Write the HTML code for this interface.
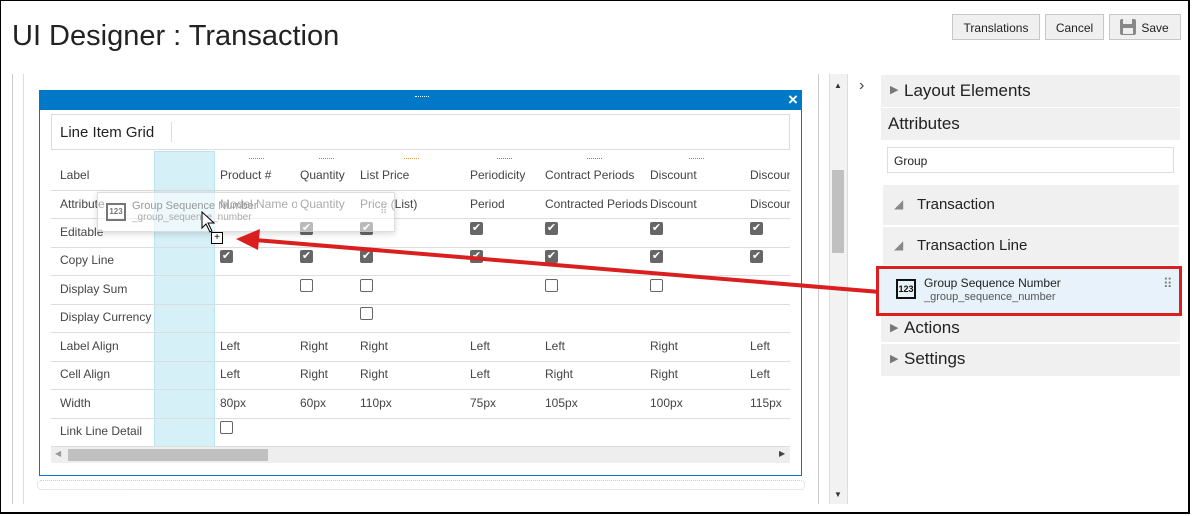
<!DOCTYPE html><html><head><style>
body{margin:0;width:1192px;height:516px;overflow:hidden;font-family:"Liberation Sans",sans-serif;background:#fff;position:relative}
.a{position:absolute}
.frame{left:0;top:0;width:1190px;height:514px;border:1px solid #000;border-right:2px solid #000;border-bottom:2px solid #000;box-sizing:border-box}
.btn{top:14px;height:26px;border:1px solid #c8c8c8;background:#f0f0f0;font-size:12px;line-height:26px;text-align:center;color:#222;box-sizing:border-box}
.t{font-size:12px;color:#444;white-space:nowrap}
.hl{left:51px;width:739px;height:1px;background:#ddd}
.cb{width:13px;height:13px;background:#666;border-radius:2px;color:#fff;font-size:11px;line-height:13px;text-align:center}
.ucb{width:11px;height:11px;border:1px solid #666;border-radius:2px}
.sec{left:881px;width:299px;background:#f0f0f0;font-size:17px;color:#222}
</style></head><body>
<div class="a frame"></div>
<div class="a" style="left:12px;top:20px;font-size:29px;color:#222">UI Designer : Transaction</div>
<div class="a btn" style="left:952px;width:88px">Translations</div>
<div class="a btn" style="left:1045px;width:59px">Cancel</div>
<div class="a btn" style="left:1109px;width:72px;padding-left:20px">Save</div>
<div class="a" style="left:1120px;top:19px;width:16px;height:16px;background:#888;border-radius:2px"><div class="a" style="left:3px;top:0;width:9px;height:5px;background:#eee"></div><div class="a" style="left:3px;top:9px;width:10px;height:6px;background:#eee"></div></div>
<div class="a" style="left:12px;top:74px;width:1px;height:430px;background:#ccc"></div>
<div class="a" style="left:23px;top:74px;width:1px;height:430px;background:#ddd"></div>
<div class="a" style="left:818px;top:74px;width:1px;height:430px;background:#ccc"></div>
<div class="a" style="left:829px;top:74px;width:17px;height:430px;background:#f2f2f2;border-left:1px solid #ddd;border-right:1px solid #ddd"></div>
<div class="a" style="left:832px;top:170px;width:12px;height:83px;background:#c0c0c0"></div>
<div class="a" style="left:834px;top:81px;font-size:8px;color:#333">▲</div>
<div class="a" style="left:834px;top:490px;font-size:8px;color:#333">▼</div>
<div class="a" style="left:859px;top:77px;font-size:16px;color:#444">›</div>
<div class="a" style="left:37px;top:480px;width:766px;height:8px;border:1px dotted #ccc;border-radius:4px"></div>
<div class="a" style="left:39px;top:90px;width:763px;height:386px;border:1px solid #0078c8;box-sizing:border-box"></div>
<div class="a" style="left:39px;top:90px;width:763px;height:20px;background:#0078c8"></div>
<div class="a" style="left:415px;top:96px;width:14px;height:1px;border-top:1px dotted #fff"></div>
<div class="a" style="left:788px;top:90px;color:#fff;font-size:17px;font-weight:bold">×</div>
<div class="a" style="left:51px;top:114px;width:739px;height:36px;border:1px solid #ddd;box-sizing:border-box"></div>
<div class="a" style="left:60px;top:124px;font-size:15px;color:#222">Line Item Grid</div>
<div class="a" style="left:171px;top:122px;width:1px;height:20px;background:#ddd"></div>
<div class="a" style="left:154px;top:151px;width:61px;height:296px;background:#d6f0f8;border:1px solid #bde3ef;box-sizing:border-box"></div>
<div class="a hl" style="top:190px"></div><div class="a hl" style="top:218px"></div><div class="a hl" style="top:247px"></div><div class="a hl" style="top:275px"></div><div class="a hl" style="top:304px"></div><div class="a hl" style="top:332px"></div><div class="a hl" style="top:361px"></div><div class="a hl" style="top:389px"></div><div class="a hl" style="top:418px"></div><div class="a hl" style="top:446px"></div>
<div class="a" style="left:249px;top:158px;width:15px;border-top:1px dotted #4a9ad8"></div>
<div class="a" style="left:319px;top:158px;width:15px;border-top:1px dotted #4a9ad8"></div>
<div class="a" style="left:404px;top:158px;width:15px;border-top:1px dotted #e0a040"></div>
<div class="a" style="left:497px;top:158px;width:15px;border-top:1px dotted #a08020"></div>
<div class="a" style="left:587px;top:158px;width:15px;border-top:1px dotted #a08020"></div>
<div class="a" style="left:689px;top:158px;width:15px;border-top:1px dotted #4a9ad8"></div>
<div class="a t" style="left:60px;top:168px">Label</div><div class="a t" style="left:60px;top:197px">Attribute</div><div class="a t" style="left:60px;top:225px">Editable</div><div class="a t" style="left:60px;top:253px">Copy Line</div><div class="a t" style="left:60px;top:282px">Display Sum</div><div class="a t" style="left:60px;top:310px">Display Currency</div><div class="a t" style="left:60px;top:339px">Label Align</div><div class="a t" style="left:60px;top:367px">Cell Align</div><div class="a t" style="left:60px;top:396px">Width</div><div class="a t" style="left:60px;top:424px">Link Line Detail</div>
<div class="a t" style="left:220px;top:168px">Product #</div><div class="a t" style="left:300px;top:168px">Quantity</div><div class="a t" style="left:360px;top:168px">List Price</div><div class="a t" style="left:470px;top:168px">Periodicity</div><div class="a t" style="left:545px;top:168px">Contract Periods</div><div class="a t" style="left:650px;top:168px">Discount</div><div class="a t" style="left:750px;top:168px;width:40px;overflow:hidden">Discount</div>
<div class="a t" style="left:220px;top:197px;width:77px;overflow:hidden">Model Name o</div><div class="a t" style="left:300px;top:197px">Quantity</div><div class="a t" style="left:360px;top:197px">Price (List)</div><div class="a t" style="left:470px;top:197px">Period</div><div class="a t" style="left:545px;top:197px;width:104px;overflow:hidden">Contracted Periods</div><div class="a t" style="left:650px;top:197px">Discount</div><div class="a t" style="left:750px;top:197px;width:40px;overflow:hidden">Discount</div>
<div class="a cb" style="left:300px;top:222px">✔</div><div class="a cb" style="left:360px;top:222px">✔</div><div class="a cb" style="left:470px;top:222px">✔</div><div class="a cb" style="left:545px;top:222px">✔</div><div class="a cb" style="left:650px;top:222px">✔</div><div class="a cb" style="left:750px;top:222px">✔</div>
<div class="a cb" style="left:220px;top:250px">✔</div><div class="a cb" style="left:300px;top:250px">✔</div><div class="a cb" style="left:360px;top:250px">✔</div><div class="a cb" style="left:470px;top:250px">✔</div><div class="a cb" style="left:545px;top:250px">✔</div><div class="a cb" style="left:650px;top:250px">✔</div><div class="a cb" style="left:750px;top:250px">✔</div>
<div class="a ucb" style="left:300px;top:279px"></div><div class="a ucb" style="left:360px;top:279px"></div><div class="a ucb" style="left:545px;top:279px"></div><div class="a ucb" style="left:650px;top:279px"></div>
<div class="a ucb" style="left:360px;top:307px"></div><div class="a ucb" style="left:220px;top:421px"></div>
<div class="a t" style="left:220px;top:339px">Left</div><div class="a t" style="left:300px;top:339px">Right</div><div class="a t" style="left:360px;top:339px">Right</div><div class="a t" style="left:470px;top:339px">Left</div><div class="a t" style="left:545px;top:339px">Left</div><div class="a t" style="left:650px;top:339px">Right</div><div class="a t" style="left:750px;top:339px">Left</div>
<div class="a t" style="left:220px;top:367px">Left</div><div class="a t" style="left:300px;top:367px">Right</div><div class="a t" style="left:360px;top:367px">Right</div><div class="a t" style="left:470px;top:367px">Left</div><div class="a t" style="left:545px;top:367px">Right</div><div class="a t" style="left:650px;top:367px">Right</div><div class="a t" style="left:750px;top:367px">Left</div>
<div class="a t" style="left:220px;top:396px">80px</div><div class="a t" style="left:300px;top:396px">60px</div><div class="a t" style="left:360px;top:396px">110px</div><div class="a t" style="left:470px;top:396px">75px</div><div class="a t" style="left:545px;top:396px">105px</div><div class="a t" style="left:650px;top:396px">100px</div><div class="a t" style="left:750px;top:396px">115px</div>
<div class="a" style="left:51px;top:447px;width:739px;height:16px;background:#eee"></div>
<div class="a" style="left:68px;top:449px;width:200px;height:12px;background:#c0c0c0"></div>
<div class="a" style="left:55px;top:449px;font-size:8px;color:#999">◀</div><div class="a" style="left:779px;top:449px;font-size:8px;color:#444">▶</div>
<div class="a" style="left:97px;top:192px;width:296px;height:38px;background:rgba(255,255,255,.55);border:1px solid rgba(200,200,200,.6);box-shadow:0 2px 6px rgba(0,0,0,.15)"></div>
<div class="a" style="left:106px;top:203px;width:16px;height:14px;border:2px solid #777;font-size:8px;color:#777;text-align:center;line-height:14px;font-weight:bold">123</div>
<div class="a" style="left:132px;top:200px;font-size:11px;color:#999">Group Sequence Number</div>
<div class="a" style="left:132px;top:212px;font-size:10px;color:#aaa">_group_sequence_number</div>
<div class="a" style="left:380px;top:206px;font-size:10px;color:#bbb">⠿</div>
<div class="a" style="left:211px;top:232px;width:10px;height:10px;border:1px solid #000;background:#fff;font-size:10px;line-height:10px;text-align:center">+</div>
<svg class="a" style="left:0;top:0" width="1192" height="516"><path d="M202 212 L202 228 L206 224 L210 232 L212 231 L208 223 L214 223 Z" fill="#fff" stroke="#000" stroke-width="1"/><line x1="880" y1="292" x2="255" y2="240" stroke="#d9201f" stroke-width="4"/><polygon points="236,239 260,229 258,250" fill="#d9201f"/></svg>
<div class="a sec" style="top:75px;height:32px"><span class="a" style="left:9px;top:8px;font-size:11px;color:#777">▶</span><span class="a" style="left:23px;top:6px">Layout Elements</span></div>
<div class="a sec" style="top:108px;height:32px"><span class="a" style="left:7px;top:6px">Attributes</span></div>
<div class="a" style="left:887px;top:147px;width:287px;height:26px;border:1px solid #ddd;box-sizing:border-box;font-size:12px;line-height:26px;padding-left:6px;color:#222">Group</div>
<div class="a sec" style="top:185px;height:40px;left:883px;width:296px"><span class="a" style="left:11px;top:12px;font-size:12px;color:#888">◢</span><span class="a" style="left:34px;top:11px;font-size:15px">Transaction</span></div>
<div class="a sec" style="top:227px;height:38px;left:883px;width:296px"><span class="a" style="left:11px;top:11px;font-size:12px;color:#888">◢</span><span class="a" style="left:34px;top:10px;font-size:15px">Transaction Line</span></div>
<div class="a" style="left:876px;top:266px;width:306px;height:50px;border:3px solid #d9201f;box-sizing:border-box;background:#e8f2fa"></div>
<div class="a" style="left:896px;top:279px;width:16px;height:16px;border:2px solid #111;font-size:9px;font-weight:bold;text-align:center;line-height:16px;color:#111">123</div>
<div class="a" style="left:924px;top:276px;font-size:12px;color:#222">Group Sequence Number</div>
<div class="a" style="left:924px;top:291px;font-size:11px;color:#555">_group_sequence_number</div>
<div class="a" style="left:1163px;top:276px;font-size:13px;color:#777">⠿</div>
<div class="a sec" style="top:316px;height:26px"><span class="a" style="left:9px;top:5px;font-size:11px;color:#777">▶</span><span class="a" style="left:23px;top:2px">Actions</span></div>
<div class="a sec" style="top:344px;height:32px"><span class="a" style="left:9px;top:8px;font-size:11px;color:#777">▶</span><span class="a" style="left:23px;top:5px">Settings</span></div>
</body></html>
